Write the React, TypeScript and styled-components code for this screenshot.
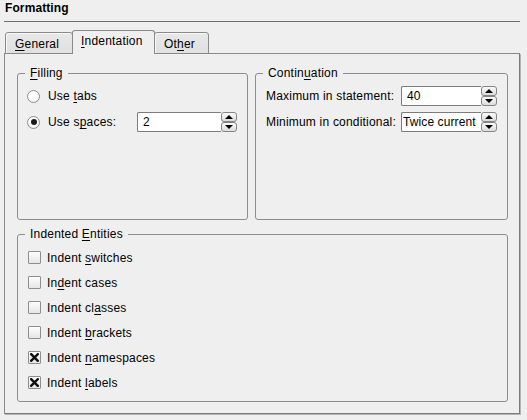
import React from "react";
import styled, { createGlobalStyle, css } from "styled-components";

const Global = createGlobalStyle`
  html, body { margin: 0; padding: 0; background: #efefef; }
  body {
    font-family: "Liberation Sans", Arial, sans-serif;
    font-size: 12px;
    color: #000;
  }
  u { text-decoration-thickness: 1px; text-underline-offset: 2px; }
`;

const Page = styled.div`
  width: 527px;
  height: 420px;
  box-sizing: border-box;
  padding: 1px 7px 0 4px;
  display: flex;
  flex-direction: column;
`;

const Title = styled.div`
  font-weight: bold;
  line-height: 15px;
  height: 20px;
  padding-left: 1px;
  border-bottom: 1px solid #6f6f6f;
  letter-spacing: 0.1px;
`;

const TabBar = styled.div`
  display: flex;
  align-items: flex-end;
  margin-top: 8px;
  margin-left: 1px;
  margin-bottom: -1px;
  position: relative;
  z-index: 1;
  height: 24px;
`;

const Tab = styled.div<{ $active?: boolean; $w: number }>`
  box-sizing: border-box;
  width: ${(p) => p.$w}px;
  border: 1px solid #8a8a8a;
  border-radius: 3px 3px 0 0;
  padding-left: 9px;
  letter-spacing: 0.2px;
  ${(p) =>
    p.$active
      ? css`
          height: 24px;
          line-height: 20px;
          border-bottom: none;
          background: #efefef;
          margin: 0 -1px;
          padding-left: 8px;
          position: relative;
        `
      : css`
          height: 22px;
          line-height: 20px;
          padding-top: 1px;
          background: linear-gradient(#e8e8e8, #e0e0e0);
          box-shadow: inset 1px 1px 0 #f8f8f8;
        `}
`;

const Panel = styled.div`
  width: 516px;
  height: 361px;
  box-sizing: border-box;
  border: 1px solid #8a8a8a;
  border-right-color: #7a7a7a;
  border-bottom-color: #7a7a7a;
  box-shadow: 1px 1px 0 #b4b4b4;
  padding: 12px 11px 11px 12px;
  display: flex;
  flex-direction: column;
  gap: 7px;
`;

const TopRow = styled.div`
  display: flex;
  gap: 7px;
  height: 154px;
`;

const Group = styled.fieldset<{ $w?: number }>`
  margin: 0;
  padding: 0;
  border: 1px solid #8d8d8d;
  border-radius: 3px;
  box-sizing: border-box;
  min-width: 0;
  ${(p) => (p.$w ? `width: ${p.$w}px; flex: none;` : "flex: 1;")}
`;

const Legend = styled.legend`
  margin-left: 7px;
  padding: 0 5px;
  line-height: 14px;
  letter-spacing: 0.2px;
`;

const Content = styled.div<{ $pt: number; $pl: number; $pr: number }>`
  padding: ${(p) => p.$pt}px ${(p) => p.$pr}px 0 ${(p) => p.$pl}px;
  display: flex;
  flex-direction: column;
`;

const Row = styled.div<{ $h: number }>`
  display: flex;
  align-items: center;
  height: ${(p) => p.$h}px;
`;

const Label = styled.span<{ $gap?: number }>`
  margin-left: ${(p) => p.$gap ?? 0}px;
  letter-spacing: 0.2px;
  white-space: nowrap;
`;

const RadioCircle = styled.span<{ $checked?: boolean }>`
  width: 13px;
  height: 13px;
  box-sizing: border-box;
  border-radius: 50%;
  border: 1px solid #8e8e8e;
  background: radial-gradient(circle at 40% 35%, #ffffff 30%, #e9e9e9 100%);
  display: flex;
  align-items: center;
  justify-content: center;
  flex: none;
  &::after {
    content: "";
    display: ${(p) => (p.$checked ? "block" : "none")};
    width: 6px;
    height: 6px;
    border-radius: 50%;
    background: #1a1a1a;
  }
`;

const CheckBox = styled.span`
  width: 13px;
  height: 13px;
  box-sizing: border-box;
  border: 1px solid #8e8e8e;
  border-radius: 1px;
  background: linear-gradient(#fdfdfd, #e6e6e6);
  display: flex;
  align-items: center;
  justify-content: center;
  flex: none;
`;

const Spin = styled.div<{ $w: number }>`
  display: flex;
  width: ${(p) => p.$w}px;
  height: 20px;
  margin-left: auto;
  flex: none;
`;

const SpinField = styled.div<{ $pad: number }>`
  flex: 1;
  min-width: 0;
  box-sizing: border-box;
  background: #fff;
  border: 1px solid #7c7c7c;
  border-right: none;
  border-radius: 2px 0 0 2px;
  padding-left: ${(p) => p.$pad}px;
  line-height: 18px;
  letter-spacing: 0.1px;
  white-space: nowrap;
  overflow: hidden;
`;

const SpinButtons = styled.div`
  width: 16px;
  display: flex;
  flex-direction: column;
  flex: none;
`;

const SpinBtn = styled.div`
  flex: 1;
  box-sizing: border-box;
  border: 1px solid #858585;
  border-radius: 3px;
  background: linear-gradient(#fafafa, #dcdcdc);
  display: flex;
  align-items: center;
  justify-content: center;
`;

const Arrow = ({ up }: { up?: boolean }) => (
  <svg width="8" height="4" viewBox="0 0 8 4">
    <path d={up ? "M0 4 L4 0 L8 4 Z" : "M0 0 L4 4 L8 0 Z"} fill="#000" />
  </svg>
);

const SpinBox = ({ value, w, pad = 5 }: { value: string; w: number; pad?: number }) => (
  <Spin $w={w}>
    <SpinField $pad={pad}>{value}</SpinField>
    <SpinButtons>
      <SpinBtn>
        <Arrow up />
      </SpinBtn>
      <SpinBtn>
        <Arrow />
      </SpinBtn>
    </SpinButtons>
  </Spin>
);

const Check = ({ checked, children }: { checked?: boolean; children: React.ReactNode }) => (
  <Row $h={25}>
    <CheckBox>
      {checked && (
        <svg width="9" height="9" viewBox="0 0 9 9">
          <path d="M1.2 1.2 L7.8 7.8 M7.8 1.2 L1.2 7.8" stroke="#111" strokeWidth="2.4" strokeLinecap="square" />
        </svg>
      )}
    </CheckBox>
    <Label $gap={6}>{children}</Label>
  </Row>
);

export default function App() {
  return (
    <>
      <Global />
      <Page>
        <Title>Formatting</Title>
        <TabBar>
          <Tab $w={68}>
            <u>G</u>eneral
          </Tab>
          <Tab $w={83} $active>
            <u>I</u>ndentation
          </Tab>
          <Tab $w={55}>
            Ot<u>h</u>er
          </Tab>
        </TabBar>
        <Panel>
          <TopRow>
            <Group $w={231}>
              <Legend>
                <u>F</u>illing
              </Legend>
              <Content $pt={3} $pl={9} $pr={10}>
                <Row $h={26}>
                  <RadioCircle />
                  <Label $gap={8}>
                    Use <u>t</u>abs
                  </Label>
                </Row>
                <Row $h={26}>
                  <RadioCircle $checked />
                  <Label $gap={8}>
                    Use s<u>p</u>aces:
                  </Label>
                  <SpinBox value="2" w={100} />
                </Row>
              </Content>
            </Group>
            <Group>
              <Legend>
                Contin<u>u</u>ation
              </Legend>
              <Content $pt={3} $pl={10} $pr={10}>
                <Row $h={26}>
                  <Label>Maximum in statement:</Label>
                  <SpinBox value="40" w={96} />
                </Row>
                <Row $h={26}>
                  <Label>Minimum in conditional:</Label>
                  <SpinBox value="Twice current" w={96} pad={1} />
                </Row>
              </Content>
            </Group>
          </TopRow>
          <Group>
            <Legend>
              Indented <u>E</u>ntities
            </Legend>
            <Content $pt={4} $pl={10} $pr={10}>
              <Check>
                Indent <u>s</u>witches
              </Check>
              <Check>
                In<u>d</u>ent cases
              </Check>
              <Check>
                Indent cl<u>a</u>sses
              </Check>
              <Check>
                Indent <u>b</u>rackets
              </Check>
              <Check checked>
                Indent <u>n</u>amespaces
              </Check>
              <Check checked>
                Indent <u>l</u>abels
              </Check>
            </Content>
          </Group>
        </Panel>
      </Page>
    </>
  );
}
